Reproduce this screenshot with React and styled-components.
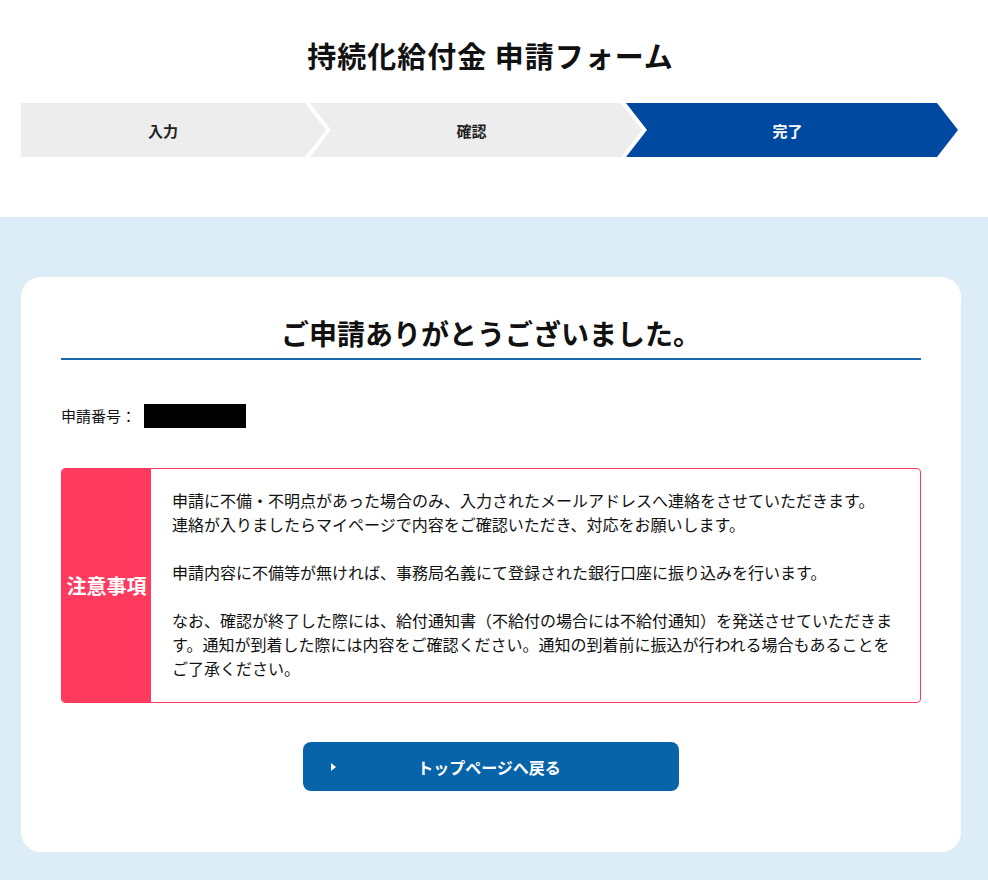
import styled, { createGlobalStyle } from "styled-components";

const GlobalStyle = createGlobalStyle`
  *, *::before, *::after {
    box-sizing: border-box;
  }
  body {
    margin: 0;
    background: #ffffff;
    font-family: "Noto Sans CJK JP", "Noto Sans", sans-serif;
    color: #111;
  }
`;

const steps = [
  { label: "入力", active: false },
  { label: "確認", active: false },
  { label: "完了", active: true },
];

const App = () => {
  return (
    <>
      <GlobalStyle />
      <Header>
        <Title>持続化給付金 申請フォーム</Title>
        <Steps>
          {steps.map((s, i) => (
            <Step key={s.label} $first={i === 0} $active={s.active}>
              {s.label}
            </Step>
          ))}
        </Steps>
      </Header>
      <Main>
        <Card>
          <Heading>ご申請ありがとうございました。</Heading>
          <NumberRow>
            申請番号：<Masked />
          </NumberRow>
          <Notice>
            <NoticeLabel>注意事項</NoticeLabel>
            <NoticeBody>
              <p>
                申請に不備・不明点があった場合のみ、入力されたメールアドレスへ連絡をさせていただきます。
                <br />
                連絡が入りましたらマイページで内容をご確認いただき、対応をお願いします。
              </p>
              <p>
                申請内容に不備等が無ければ、事務局名義にて登録された銀行口座に振り込みを行います。
              </p>
              <p>
                なお、確認が終了した際には、給付通知書（不給付の場合には不給付通知）を発送させていただきます。通知が到着した際には内容をご確認ください。通知の到着前に振込が行われる場合もあることをご了承ください。
              </p>
            </NoticeBody>
          </Notice>
          <ButtonRow>
            <BackButton type="button">
              <Arrow />
              トップページへ戻る
            </BackButton>
          </ButtonRow>
        </Card>
      </Main>
    </>
  );
};

export default App;

const Header = styled.header`
  padding: 35px 30px 60px 21px;
`;

const Title = styled.h1`
  margin: 0 0 28px;
  text-align: center;
  font-size: 29px;
  font-weight: 700;
  letter-spacing: 1px;
  line-height: 40px;
  padding-left: 2px;
`;

const Steps = styled.div`
  display: flex;
  height: 54px;
`;

const Step = styled.div`
  flex: ${(p) => (p.$first ? "0 0 305px" : "1 1 0")};
  margin-left: ${(p) => (p.$first ? "0" : "-16px")};
  display: flex;
  align-items: center;
  justify-content: center;
  padding-left: ${(p) => (p.$first ? "0" : "12px")};
  padding-right: 21px;
  background: ${(p) => (p.$active ? "#0049a1" : "#ededed")};
  color: ${(p) => (p.$active ? "#fff" : "#222")};
  font-size: 15px;
  font-weight: 700;
  clip-path: ${(p) =>
    p.$first
      ? "polygon(0 0, calc(100% - 21px) 0, 100% 50%, calc(100% - 21px) 100%, 0 100%)"
      : "polygon(0 0, calc(100% - 21px) 0, 100% 50%, calc(100% - 21px) 100%, 0 100%, 21px 50%)"};
`;

const Main = styled.main`
  background: #dcedf7;
  padding: 60px 27px 28px 21px;
`;

const Card = styled.section`
  background: #fff;
  border-radius: 20px;
  padding: 36px 40px 61px;
`;

const Heading = styled.h2`
  margin: 0;
  text-align: center;
  font-size: 28px;
  font-weight: 700;
  line-height: 40px;
  padding-bottom: 5px;
  border-bottom: 2px solid #1a67aa;
`;

const NumberRow = styled.div`
  display: flex;
  align-items: center;
  margin-top: 44px;
  font-size: 15px;
  line-height: 24px;
`;

const Masked = styled.span`
  display: inline-block;
  width: 102px;
  height: 24px;
  background: #000;
  margin-left: 8px;
`;

const Notice = styled.div`
  display: flex;
  margin-top: 40px;
  border: 1px solid #ff3a5f;
  border-radius: 4px;
  overflow: hidden;
`;

const NoticeLabel = styled.div`
  flex: 0 0 89px;
  display: flex;
  align-items: center;
  justify-content: center;
  background: #ff3a5f;
  color: #fff;
  font-size: 20px;
  font-weight: 700;
`;

const NoticeBody = styled.div`
  flex: 1;
  padding: 19px 22px 22px 21px;
  font-size: 16px;
  line-height: 24px;
  p {
    margin: 0 0 24px;
  }
  p:last-child {
    margin-bottom: 0;
  }
`;

const ButtonRow = styled.div`
  display: flex;
  justify-content: center;
  margin-top: 39px;
`;

const BackButton = styled.button`
  position: relative;
  width: 376px;
  height: 49px;
  border: none;
  border-radius: 8px;
  background: #0864a9;
  color: #fff;
  font-family: inherit;
  font-size: 16px;
  font-weight: 700;
  cursor: pointer;
  padding-left: 2px;
`;

const Arrow = styled.span`
  position: absolute;
  left: 28px;
  top: 50%;
  transform: translateY(-50%);
  width: 0;
  height: 0;
  border-top: 4px solid transparent;
  border-bottom: 4px solid transparent;
  border-left: 5px solid #fff;
`;
